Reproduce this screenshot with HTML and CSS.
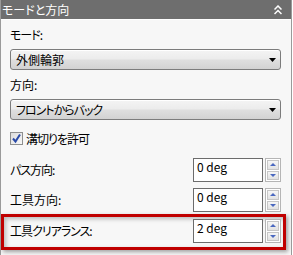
FILE: index.html
```html
<!DOCTYPE html>
<html lang="ja">
<head>
<meta charset="utf-8">
<title>モードと方向</title>
<link rel="stylesheet" href="styles.css">
</head>
<body>
<div class="panel">
  <div class="header">
    <span class="title">モードと方向</span>
    <svg class="collapse" width="8" height="10" viewBox="0 0 8 10"><polyline points="0.5,4.5 4,1 7.5,4.5" fill="none" stroke="#fff" stroke-width="1.5"/><polyline points="0.5,9 4,5.5 7.5,9" fill="none" stroke="#fff" stroke-width="1.5"/></svg>
  </div>
  <div class="content">
    <div class="field-label first kana">モード:</div>
    <div class="select"><span class="value">外側輪郭</span><svg class="arrow" width="7" height="4" viewBox="0 0 7 4"><polygon points="0,0 7,0 3.5,4" fill="#000"/></svg></div>
    <div class="field-label">方向:</div>
    <div class="select"><span class="value kana">フロントからバック</span><svg class="arrow" width="7" height="4" viewBox="0 0 7 4"><polygon points="0,0 7,0 3.5,4" fill="#000"/></svg></div>
    <label class="check"><span class="box"><svg width="11" height="11" viewBox="0 0 11 11"><polyline points="2,5.5 4.5,8.5 9,1.5" fill="none" stroke="#2a4aa8" stroke-width="2"/></svg></span><span class="kana">溝切りを許可</span></label>
    <div class="row">
      <span class="row-label kana">パス方向:</span>
      <div class="spin"><div class="input">0 deg</div><div class="buttons"><span class="btn"><i class="up"></i></span><span class="btn"><i class="down"></i></span></div></div>
    </div>
    <div class="row">
      <span class="row-label">工具方向:</span>
      <div class="spin"><div class="input">0 deg</div><div class="buttons"><span class="btn"><i class="up"></i></span><span class="btn"><i class="down"></i></span></div></div>
    </div>
    <div class="row highlight">
      <span class="row-label kana">工具クリアランス:</span>
      <div class="spin"><div class="input">2 deg</div><div class="buttons"><span class="btn"><i class="up"></i></span><span class="btn"><i class="down"></i></span></div></div>
    </div>
  </div>
</div>
</body>
</html>
```
FILE: styles.css
```css
html, body {
  margin: 0;
  padding: 0;
  background: #ffffff;
}
body {
  font-family: "Noto Sans CJK JP", "Liberation Sans", sans-serif;
  font-size: 12px;
  line-height: 14px;
  color: #000;
  font-feature-settings: "palt";
}
.kana {
  letter-spacing: -1px;
}
.panel {
  width: 292px;
  box-sizing: border-box;
  border-left: 1px solid #9a9a9a;
  border-right: 1px solid #9a9a9a;
  background: #f7f7f7;
  height: 255px;
  overflow: hidden;
}
.header {
  height: 19px;
  background: #6e6e6e;
  display: flex;
  align-items: center;
  justify-content: space-between;
  padding: 0 9px 0 2px;
  margin-left: -1px;
  color: #fff;
  font-size: 12px;
}
.content {
  border-top: 1px solid #ffffff;
  padding: 0 10px 0 9px;
  display: flex;
  flex-direction: column;
}
.field-label {
  margin-top: 8px;
  height: 14px;
}
.field-label.first {
  margin-top: 8px;
}
.select {
  margin-top: 7px;
  height: 21px;
  box-sizing: border-box;
  border: 1px solid #7c7c7c;
  border-radius: 3px;
  background: linear-gradient(#f4f4f4 0%, #ececec 45%, #dedede 55%, #d2d2d2 100%);
  box-shadow: inset 0 1px 0 #ffffff;
  display: flex;
  align-items: center;
  justify-content: space-between;
  padding: 0 4px 0 5px;
}
.select .value {
  padding-top: 1px;
}
.check {
  margin-top: 12px;
  display: flex;
  align-items: center;
  gap: 3px;
  height: 13px;
}
.check .box {
  width: 13px;
  height: 13px;
  box-sizing: border-box;
  border: 1px solid #8e8f8f;
  background: linear-gradient(135deg, #dcdcdc, #f8f8f8);
  display: flex;
  align-items: center;
  justify-content: center;
}
.row {
  display: flex;
  align-items: center;
  justify-content: space-between;
  margin-top: 6px;
}
.check + .row {
  margin-top: 13px;
}
.row.highlight {
  margin: 2px -5px 0 -9px;
  border: 3px solid #c00000;
  padding: 2px 2px 4px 6px;
  box-shadow: 2px 2px 4px rgba(0, 0, 0, 0.35), inset 2px 2px 4px rgba(0, 0, 0, 0.25);
}
.spin {
  display: flex;
  gap: 2px;
}
.input {
  width: 70px;
  height: 24px;
  box-sizing: border-box;
  border: 1px solid #6c6c6c;
  background: #fff;
  padding: 1px 0 0 3px;
  font-size: 12px;
}
.buttons {
  width: 16px;
  height: 24px;
  box-sizing: border-box;
  border: 1px solid #b5b5b5;
  background: #fff;
  display: flex;
  flex-direction: column;
  gap: 1px;
  padding: 1px;
}
.btn {
  flex: 1;
  background: linear-gradient(#f6f6f6, #e2e2e2);
  border: 1px solid #c6c6c6;
  display: flex;
  align-items: center;
  justify-content: center;
}
.btn i {
  width: 0;
  height: 0;
  border-left: 3px solid transparent;
  border-right: 3px solid transparent;
}
.btn i.up {
  border-bottom: 3px solid #4a68c0;
}
.btn i.down {
  border-top: 3px solid #4a68c0;
}
```
